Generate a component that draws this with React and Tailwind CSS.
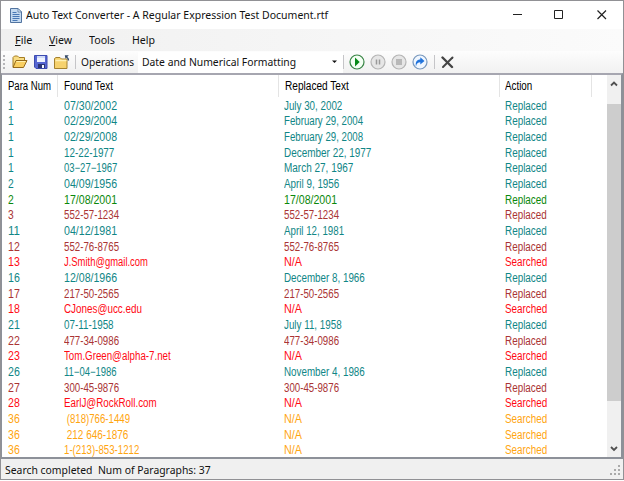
import { useLayoutEffect, useRef, useState } from "react";

// Text stretched to a given pixel width.
function Fit({ w, children }) {
  const ref = useRef(null);
  const [s, setS] = useState(1);
  useLayoutEffect(() => {
    setS(w / ref.current.offsetWidth);
  }, [w]);
  return (
    <span ref={ref} className="inline-block origin-left whitespace-pre" style={{ transform: `scaleX(${s})` }}>
      {children}
    </span>
  );
}

const teal = "text-[#108686]";
const green = "text-[#0a880a]";
const brown = "text-[#aa3434]";
const red = "text-[#ff0a14]";
const orange = "text-[#ffa510]";

const rows = [
  ["1", "07/30/2002", 53, "July 30, 2002", 58, teal],
  ["1", "02/29/2004", 53, "February 29, 2004", 79, teal],
  ["1", "02/29/2008", 53, "February 29, 2008", 79, teal],
  ["1", "12-22-1977", 50, "December 22, 1977", 87, teal],
  ["1", "03−27−1967", 53, "March 27, 1967", 69, teal],
  ["2", "04/09/1956", 53, "April 9, 1956", 55, teal],
  ["2", "17/08/2001", 53, "17/08/2001", 53, green],
  ["3", "552-57-1234", 55, "552-57-1234", 55, brown],
  ["11", "04/12/1981", 53, "April 12, 1981", 60, teal],
  ["12", "552-76-8765", 55, "552-76-8765", 55, brown],
  ["13", "J.Smith@gmail.com", 84, "N/A", 18, red],
  ["16", "12/08/1966", 53, "December 8, 1966", 81, teal],
  ["17", "217-50-2565", 55, "217-50-2565", 55, brown],
  ["18", "CJones@ucc.edu", 78, "N/A", 18, red],
  ["21", "07-11-1958", 50, "July 11, 1958", 58, teal],
  ["22", "477-34-0986", 55, "477-34-0986", 55, brown],
  ["23", "Tom.Green@alpha-7.net", 107, "N/A", 18, red],
  ["26", "11−04−1986", 53, "November 4, 1986", 81, teal],
  ["27", "300-45-9876", 55, "300-45-9876", 55, brown],
  ["28", "EarlJ@RockRoll.com", 93, "N/A", 18, red],
  ["36", " (818)766-1449", 66, "N/A", 18, orange],
  ["36", " 212 646-1876", 64, "N/A", 18, orange],
  ["36", "1-(213)-853-1212", 75, "N/A", 18, orange],
];

function DocIcon() {
  return (
    <svg width="12" height="15" viewBox="0 0 12 15">
      <path d="M.5 .5h7.5l3.5 3.5v10.500H.5z" fill="#c5daf0" stroke="#5274a0" />
      <path d="M8 .5V4h3.500z" fill="#eef6ff" stroke="#5274a0" strokeWidth=".8" />
      <path d="M2.500 4.500h4M2.500 6.500h7M2.500 8.500h7M2.500 10.500h7M2.500 12.500h5" stroke="#4978b5" />
    </svg>
  );
}

function OpenIcon() {
  return (
    <svg width="16" height="14" viewBox="0 0 16 14">
      <path d="M1 12V2.500L2.500 1h3L7 2.500h5.500V5.500" fill="#f8dc83" stroke="#a57c22" />
      <path d="M1 12.500L4 5.500h11L11.500 12.500z" fill="#f9cf62" stroke="#94691a" />
      <path d="M4.500 6.500h9" stroke="#fff0ae" />
    </svg>
  );
}

function SaveIcon() {
  return (
    <svg width="14" height="14" viewBox="0 0 14 14">
      <path d="M.5 .5h12.500v13H2L.5 12z" fill="#5666d2" stroke="#3c4bb0" />
      <path d="M3 1h8v6H3z" fill="#eef3ff" />
      <path d="M3 1h8v2H3z" fill="#cfdaf8" />
      <path d="M4 9h7v4H4z" fill="#2a3474" />
      <path d="M8 10h2v3H8z" fill="#f4f7ff" />
    </svg>
  );
}

function FolderUpIcon() {
  return (
    <svg width="16" height="15" viewBox="0 0 16 15">
      <path d="M.5 13.500v-10L2 2.500h4l1.500 1.500h5.500v9.500z" fill="#f6d26e" stroke="#a5822f" />
      <path d="M1.500 5.500h11" stroke="#fff1b5" strokeWidth="1.500" />
      <path d="M14.500 5.500c0-1.800-.5-2.500-2-3.500" fill="none" stroke="#344967" strokeWidth="1.400" />
      <path d="M10.800 .3h4l-3.300 3.400z" fill="#344967" />
    </svg>
  );
}

function RoundIcon({ ring, fill, children }) {
  return (
    <svg width="16" height="16" viewBox="0 0 16 16">
      <circle cx="8" cy="8" r="7" fill={fill} stroke={ring} strokeWidth="1.200" />
      {children}
    </svg>
  );
}

export default function App() {
  return (
    <div className="flex h-[480px] w-[624px] flex-col overflow-hidden border border-[#919195] bg-[#f0f0f0] font-['Noto_Sans','Open_Sans',sans-serif] text-[11.500px] text-[#111]">
      <div className="flex h-7 shrink-0 items-center bg-white pl-[9px]">
        <DocIcon />
        <div className="ml-[4px] w-[470px] leading-none">
          <Fit w={302}>Auto Text Converter - A Regular Expression Test Document.rtf</Fit>
        </div>
        <svg width="110" height="12" viewBox="0 0 110 12" className="ml-[12px]" fill="none" stroke="#222">
          <path d="M5 5.500h9" />
          <path d="M46.500 1.500h8v8h-8z" />
          <path d="M89.500 1.500l8.500 8.500M98 1.500l-8.500 8.500" strokeWidth="1.200" />
        </svg>
      </div>

      <div className="flex h-[22px] shrink-0 items-center bg-gradient-to-r from-[#f0f0f0] to-[#fbfbfb] pl-[14px] leading-none">
        <div className="w-[34px]"><Fit w={17}><u>F</u>ile</Fit></div>
        <div className="w-[40px]"><Fit w={23}><u>V</u>iew</Fit></div>
        <div className="w-[43px]"><Fit w={26}>Tools</Fit></div>
        <div><Fit w={23}>Help</Fit></div>
      </div>

      <div className="flex h-[22px] shrink-0 items-center bg-gradient-to-b from-[#fdfdfd] to-[#f1f1f1] pl-[2px] leading-none">
        <div className="flex w-[9px] flex-col gap-[2px]">
          <i className="size-[2px] bg-[#b5b5b8]" />
          <i className="size-[2px] bg-[#b5b5b8]" />
          <i className="size-[2px] bg-[#b5b5b8]" />
          <i className="size-[2px] bg-[#b5b5b8]" />
        </div>
        <div className="w-[22px]"><OpenIcon /></div>
        <div className="w-[20px]"><SaveIcon /></div>
        <div className="w-[21px]"><FolderUpIcon /></div>
        <div className="h-[14px] w-px bg-[#c5c5c8]" />
        <div className="ml-[5px] w-[57px]"><Fit w={53}>Operations</Fit></div>
        <div className="flex h-[21px] w-[205px] items-center bg-white pl-[4px]">
          <div className="w-[190px]"><Fit w={154}>Date and Numerical Formatting</Fit></div>
          <svg width="6" height="4" viewBox="0 0 6 4"><path d="M0 .5h5L2.500 3z" fill="#111" /></svg>
        </div>
        <div className="mr-[5px] h-[14px] w-px bg-[#c5c5c8]" />
        <div className="flex gap-[5px]">
          <RoundIcon ring="#378444" fill="#f4fff4"><path d="M6 3.500l4.700 4.500L6 12.500z" fill="#078b18" /></RoundIcon>
          <RoundIcon ring="#b4b4b4" fill="#e6e6e6"><path d="M6.500 5.500v5M9.500 5.500v5" stroke="#999" strokeWidth="1.500" /></RoundIcon>
          <RoundIcon ring="#b4b4b4" fill="#e6e6e6"><path d="M5 5h6v6H5z" fill="#b8b8b8" /></RoundIcon>
          <RoundIcon ring="#7898bd" fill="#f0f7ff"><path d="M4 12.500C3 8 5 5.500 8.300 5.500V3.300L12.500 7 8.300 10.500V8.300C6 8.300 4.500 9.500 4 12.500z" fill="#2274dc" /></RoundIcon>
        </div>
        <div className="ml-[6px] h-[14px] w-px bg-[#c5c5c8]" />
        <svg width="13" height="13" viewBox="0 0 13 13" className="ml-[6px]" fill="none" stroke="#444" strokeLinecap="round">
          <path d="M1.500 1.500L11 11" strokeWidth="2.400" />
          <path d="M11.500 1.500L2 11" strokeWidth="2" />
        </svg>
      </div>

      <div className="flex h-[386px] shrink-0 border-2 border-t-[#a6a6b0] border-r-[#8d9199] border-b-[#8d9199] border-l-[#8d9199] border-l-[1px] bg-white font-['Liberation_Sans',Arial,sans-serif] text-[12px] font-normal">
        <div className="flex w-[605px] flex-col overflow-hidden">
          <div className="mb-[1px] flex h-[22px] shrink-0 items-center leading-none text-black">
            <div className="flex h-full w-[56px] items-center border-r border-[#e4e4e4] pl-[6px]"><Fit w={43}>Para Num</Fit></div>
            <div className="flex h-full w-[221px] items-center border-r border-[#e4e4e4] pl-[6px]"><Fit w={49}>Found Text</Fit></div>
            <div className="flex h-full w-[221px] items-center border-r border-[#e4e4e4] pl-[6px]"><Fit w={64}>Replaced Text</Fit></div>
            <div className="flex h-full w-[92px] items-center border-r border-[#e4e4e4] pl-[5px]"><Fit w={27}>Action</Fit></div>
          </div>
          {rows.map(([num, found, fw, repl, rw, color], i) => (
            <div key={i} className={`flex h-[15.670px] shrink-0 items-center pl-[6px] leading-none ${color}`}>
              <div className="w-[55.500px]"><Fit w={num.length > 1 ? 11.500 : 6}>{num}</Fit></div>
              <div className="w-[220.500px]"><Fit w={fw}>{found}</Fit></div>
              <div className="w-[221px]"><Fit w={rw}>{repl}</Fit></div>
              <div><Fit w={42}>{color === red || color === orange ? "Searched" : "Replaced"}</Fit></div>
            </div>
          ))}
        </div>
        <div className="flex w-[14px] flex-col items-center bg-[#f0f0f0]">
          <svg width="14" height="29" viewBox="0 0 14 29" fill="none" stroke="#505050" strokeWidth="1.800"><path d="M4 10.500L7 7.500l3 3" /></svg>
          <div className="h-[297px] w-full bg-[#cdcdcd]" />
          <svg width="14" height="56" viewBox="0 0 14 56" fill="none" stroke="#505050" strokeWidth="1.800"><path d="M4 46l3 3 3-3" /></svg>
        </div>
      </div>

      <div className="flex flex-1 items-center justify-between pt-[1px] pl-[4px] leading-none">
        <Fit w={206}>Search completed  Num of Paragraphs: 37</Fit>
        <svg width="12" height="12" viewBox="0 0 12 12" fill="#aaa" className="mr-[1px]">
          <path d="M8 1h2v2H8zM4 5h2v2H4zM8 5h2v2H8zM0 9h2v2H0zM4 9h2v2H4zM8 9h2v2H8z" />
        </svg>
      </div>
    </div>
  );
}
